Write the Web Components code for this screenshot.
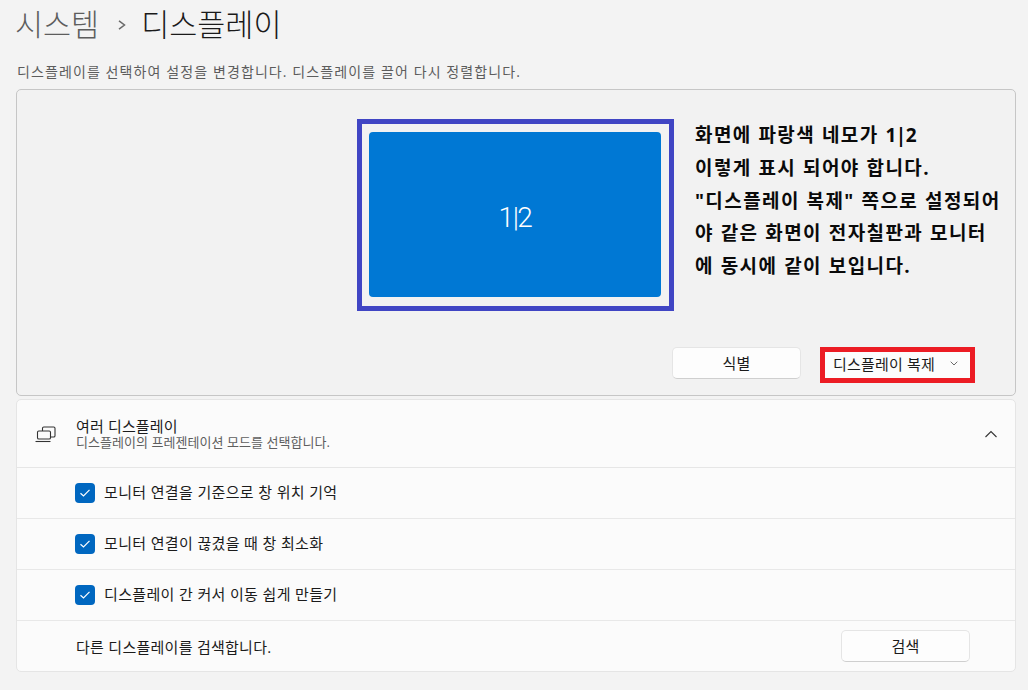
<!DOCTYPE html>
<html lang="ko"><head><meta charset="utf-8"><style>
html,body{margin:0;padding:0;background:#f3f3f3}
body{width:1028px;height:690px;overflow:hidden;font-family:"Open Sans","Noto Sans CJK KR",sans-serif;color:#1b1b1b}
</style></head><body>
<settings-page></settings-page>
<template id="t-page"><style>
:host{display:flex;flex-direction:column;padding:0 12px 0 16px}
.crumb{display:flex;align-items:center;height:48px;font-size:30.500px;font-weight:300;line-height:48px;margin-left:-1px;margin-bottom:2px;white-space:nowrap}
.crumb .a{color:#5d5d5d}.crumb .b{color:#1a1a1a}
.crumb svg{margin:1px 15px 0 19px}
.cap{font-size:14px;line-height:18px;color:#5c5c5c;margin-top:13px;height:26px;letter-spacing:1.100px;padding-left:1px;white-space:nowrap}
</style><div class="crumb"><span class="a">시스템</span><svg width="8" height="10" viewBox="0 0 8 10"><path d="M1 .8l5.500 4.200L1 9.200" fill="none" stroke="#6a6a6a" stroke-width="1.500"/></svg><span class="b">디스플레이</span></div>
<div class="cap">디스플레이를 선택하여 설정을 변경합니다. 디스플레이를 끌어 다시 정렬합니다.</div>
<preview-card></preview-card><multi-card></multi-card></template>

<template id="t-preview"><style>
:host{display:flex;flex-direction:column;box-sizing:border-box;height:307px;border:1px solid #c6c6c6;border-radius:5px;background:#f2f2f2}
.top{display:flex;height:257px;box-sizing:border-box;padding:29px 0 0 340px}
.frame{box-sizing:border-box;width:317px;height:192px;border:5px solid #4045c4;padding:8px 8px 9px 7px;display:flex}
.scr{flex:1;background:#0078d4;border-radius:4px;color:#fff;display:flex;align-items:center;justify-content:center;font-family:Roboto,sans-serif;font-size:28px;font-weight:300;letter-spacing:-1.500px;padding-top:5px;box-sizing:border-box}
.note{margin:0 0 0 21px;width:310px;font-size:19px;font-weight:700;line-height:32.8px;color:#0a0a0a;letter-spacing:1.400px;word-spacing:.5px;white-space:nowrap}
.note span{letter-spacing:-.5px}
.bar{display:flex;align-items:flex-start;padding-left:655px}
.red{margin-left:19px;box-sizing:border-box;width:155px;height:36px;border:5px solid #ec1c24;background:#fcfcfc;display:flex;align-items:center;font-size:15px;padding:0 0 3px 8px;color:#1b1b1b;letter-spacing:.2px;white-space:nowrap}
.red svg{margin:0 0 0 15px}
</style><div class="top"><div class="frame"><div class="scr">1|2</div></div><div class="note">화면에 파랑색 네모가 <span>1|2</span><br>이렇게 표시 되어야 합니다.<br>"디스플레이 복제" 쪽으로 설정되어<br>야 같은 화면이 전자칠판과 모니터<br>에 동시에 같이 보입니다.</div></div>
<div class="bar"><win-button>식별</win-button><div class="red">디스플레이 복제<svg width="8" height="5" viewBox="0 0 8 5"><path d="M.7.7L4 4 7.300.7" fill="none" stroke="#6b6b6b" stroke-width="1"/></svg></div></div></template>

<template id="t-button"><style>
:host{display:flex;align-items:center;justify-content:center;box-sizing:border-box;width:129px;height:32px;padding-bottom:1px;background:#fdfdfd;border:1px solid #e5e5e5;border-bottom-color:#cfcfcf;border-radius:5px;font-size:15px;letter-spacing:.3px;color:#1b1b1b}
</style><slot></slot></template>

<template id="t-multi"><style>
:host{display:flex;flex-direction:column;box-sizing:border-box;margin-top:3px;height:273px;border:1px solid #e5e5e5;border-radius:5px;background:#fbfbfb}
.head{display:flex;align-items:center;box-sizing:border-box;height:68px;padding-left:18px;padding-right:17px;border-bottom:1px solid #e6e6e6}
.head .ic{width:24px;height:20px;margin-right:17px}
.tx{flex:1;display:flex;flex-direction:column;margin-top:1px}
.t1{font-size:15px;line-height:16px;color:#1b1b1b;letter-spacing:.15px}
.t2{font-size:13px;line-height:16px;color:#5e5e5e;letter-spacing:.05px}
.last{display:flex;align-items:center;justify-content:space-between;box-sizing:border-box;height:50px;padding:0 45px 0 59px;font-size:15px;letter-spacing:.27px}
</style><div class="head"><svg class="ic" viewBox="0 0 24 20" fill="none" stroke="#333" stroke-width="1.100"><path d="M7.500 7V4.300C7.500 3.600 8.100 3 8.800 3h9.900c.7 0 1.300.6 1.300 1.300v7.400c0 .7-.6 1.300-1.300 1.300H15.500"/><rect x="2.500" y="7" width="13" height="8" rx="1.300"/><path d="M.5 17.500h15"/></svg><div class="tx"><div class="t1">여러 디스플레이</div><div class="t2">디스플레이의 프레젠테이션 모드를 선택합니다.</div></div><svg width="14" height="8" viewBox="0 0 14 8"><path d="M1.500 7L7 1.500 12.500 7" fill="none" stroke="#333" stroke-width="1.100"/></svg></div>
<check-row>모니터 연결을 기준으로 창 위치 기억</check-row><check-row>모니터 연결이 끊겼을 때 창 최소화</check-row><check-row>디스플레이 간 커서 이동 쉽게 만들기</check-row>
<div class="last"><span>다른 디스플레이를 검색합니다.</span><win-button>검색</win-button></div></template>

<template id="t-check"><style>
:host{display:flex;align-items:center;box-sizing:border-box;height:51px;padding-left:58px;border-bottom:1px solid #e8e8e8;font-size:15px;letter-spacing:.35px;color:#1b1b1b}
.b{width:20px;height:20px;border-radius:4px;background:#0067c0;display:flex;align-items:center;justify-content:center;margin-right:9px}
.l{padding-bottom:3px}
</style><span class="b"><svg width="12" height="10" viewBox="0 0 12 10"><path d="M1.500 5.200L4.500 8 10.500 1.800" fill="none" stroke="#fff" stroke-width="1.200"/></svg></span><span class="l"><slot></slot></span></template>
<script>
const def=(n,t)=>customElements.define(n,class extends HTMLElement{constructor(){super();this.attachShadow({mode:"open"}).appendChild(document.getElementById(t).content.cloneNode(true));}});
def("win-button","t-button");def("check-row","t-check");def("preview-card","t-preview");def("multi-card","t-multi");def("settings-page","t-page");
</script></body></html>
